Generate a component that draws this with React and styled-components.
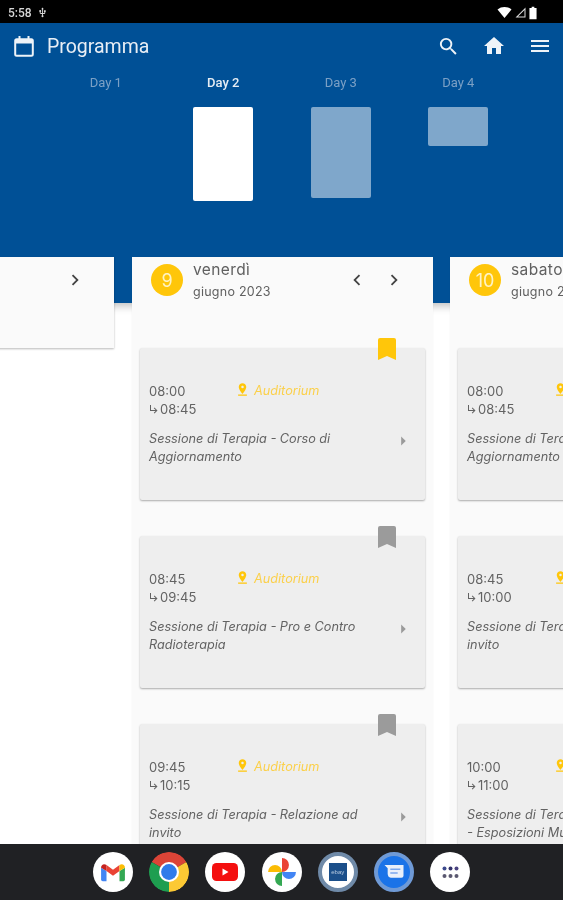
import React from 'react';
import styled, { createGlobalStyle } from 'styled-components';
import {
  MdSearch, MdHome, MdMenu, MdChevronLeft, MdChevronRight,
  MdPinDrop, MdArrowRight, MdSubdirectoryArrowRight, MdUsb,
} from 'react-icons/md';

const Global = createGlobalStyle`
  html, body { margin: 0; padding: 0; background: #fff; }
  * { box-sizing: border-box; }
`;

const Page = styled.div`
  width: 563px; height: 900px; display: flex; flex-direction: column; overflow: hidden;
  font-family: "Roboto", "Liberation Sans", sans-serif; filter: blur(0.45px);
`;
const StatusBar = styled.div`
  height: 23px; flex: none; background: #000; color: #d8d8d8; display: flex; align-items: center;
  padding: 2px 26px 0 8px; font-size: 12px; font-weight: 500; gap: 5px;
`;
const StatusRight = styled.div`
  margin-left: auto; display: flex; align-items: center; gap: 3px;
`;
const Main = styled.div`
  flex: 1; min-height: 0; overflow: hidden; background: #fff;
`;
const Hero = styled.header`
  height: 280px; background: #005096; box-shadow: 0 3px 8px rgba(0,0,0,.25); color: #fff;
`;
const AppBar = styled.div`
  height: 46px; display: flex; align-items: center; padding: 0 11px 0 14px;
`;
const Title = styled.h1`
  margin: 0 0 0 13px; font-size: 19.5px; font-weight: 400; color: #e8eef5; flex: 1;
`;
const ActionRow = styled.div`
  display: flex; align-items: center; gap: 22px; color: #eef3f8;
`;
const Tabs = styled.div`
  display: grid; grid-template-columns: repeat(4, 117.5px); padding: 0 0 0 47px; margin-top: 5px;
`;
const Tab = styled.div`
  display: flex; flex-direction: column; align-items: center; gap: 15px;
`;
const TabLabel = styled.span`
  font-size: 13px; line-height: 18px; font-weight: ${p => p.$active ? 500 : 400};
  color: ${p => p.$active ? '#e6edf4' : '#7ba0c5'};
`;
const Bar = styled.div`
  width: 60px; border-radius: 2px; height: ${p => p.$h}px;
  background: ${p => p.$active ? '#fff' : '#7fa7cb'};
`;
const Board = styled.div`
  display: grid; grid-template-columns: 300px 301px 300px; column-gap: 18px; align-items: start;
  margin: -46px 0 0 -186px; width: 936px; position: relative;
`;
const Column = styled.section`
  background: #fafafa;
  box-shadow: ${p => p.$short ? '0 1px 2px rgba(0,0,0,.28)' : '0 0 1px rgba(0,0,0,.08)'};
  padding-bottom: ${p => p.$short ? '0' : '40px'};
  margin-left: ${p => p.$pull ? '-1px' : '0'};
`;
const ColumnHead = styled.div`
  height: 91px; display: flex; align-items: flex-start; padding: 7px 27px 0 19px;
`;
const Badge = styled.div`
  width: 32px; height: 32px; border-radius: 50%; background: #ffc60a; color: #fff3c4; flex: none;
  display: flex; align-items: center; justify-content: center; font-size: 18px; font-family: "Inter", sans-serif;
`;
const DateText = styled.div`
  margin-left: 10px; flex: 1; margin-top: -4px; font-family: "Inter", sans-serif; color: #606060;
`;
const DayName = styled.div`
  font-size: 15.5px; line-height: 20px; letter-spacing: .4px;
`;
const MonthName = styled.div`
  font-size: 12.5px; line-height: 20px; margin-top: 2px; letter-spacing: .25px;
`;
const Navs = styled.div`
  display: flex; gap: 15px; color: #444; margin: 5px 1px 0 0;
`;
const NavSlot = styled.div`
  width: 22px; height: 22px; display: flex; align-items: center; justify-content: center;
`;
const List = styled.div`
  display: flex; flex-direction: column; gap: 36px; padding: 0 8px;
`;
const Session = styled.article`
  position: relative; height: 152px; background: #eeeeee; border-radius: 2px; padding: 34px 11px 0 9px;
  box-shadow: 0 1px 2px rgba(0,0,0,.32); font-family: "Inter", sans-serif; color: #626262;
`;
const Mark = styled.svg`
  position: absolute; top: -10px; right: 29px; width: 18px; height: 22px;
`;
const TimeRow = styled.div`
  display: flex; font-size: 13px; line-height: 18px;
`;
const Times = styled.div`
  width: 87px; flex: none;
`;
const EndTime = styled.div`
  display: flex; align-items: center; margin-left: -1px;
`;
const Place = styled.div`
  display: flex; align-items: center; height: 18px; font-style: italic; font-size: 12.7px; color: #fbd04b;
`;
const PinIcon = styled(MdPinDrop)`
  color: #ffc60a; margin-right: 4px; margin-top: -3px; margin-left: -1px; flex: none;
`;
const TitleRow = styled.div`
  display: flex; margin-top: 12px;
`;
const SessionTitle = styled.div`
  flex: 1; font-style: italic; font-size: 12.7px; line-height: 18px; white-space: pre-line; padding-right: 28px;
`;
const ArrowIcon = styled(MdArrowRight)`
  color: #9a9a9a; flex: none;
`;
const Dock = styled.nav`
  height: 56px; flex: none; background: #202124; display: flex; align-items: center;
  padding-left: 93px; gap: 16.2px;
`;
const DockIcon = styled.div`
  width: 40px; height: 40px; border-radius: 50%; background: ${p => p.$bg || '#fff'}; flex: none;
  display: flex; align-items: center; justify-content: center; overflow: hidden;
  border: ${p => p.$ring ? `4px solid ${p.$ring}` : 'none'};
`;
const EbayTile = styled.div`
  width: 18px; height: 18px; background: #1b4f8a; color: #b8cbe0; font-size: 6px; display: flex;
  align-items: center; justify-content: center; font-family: "Liberation Sans", sans-serif;
`;

const CalendarIcon = () => (
  <svg width="20" height="21" viewBox="0 0 20 21" fill="none">
    <rect x="1.2" y="3.2" width="17.600" height="16.600" rx="1.500" stroke="#eef3f8" strokeWidth="2" />
    <rect x="1" y="3" width="18" height="4.500" fill="#eef3f8" />
    <path d="M5.500 0v3M14.500 0v3" stroke="#eef3f8" strokeWidth="2" />
  </svg>
);

const BookmarkMark = ({ on }) => (
  <Mark viewBox="0 0 18 22"><path d="M2 0h14a2 2 0 0 1 2 2v20l-9-4-9 4V2a2 2 0 0 1 2-2z" fill={on ? '#ffc60a' : '#9b9b9b'} /></Mark>
);

const SessionCard = ({ start, end, title, on }) => (
  <Session>
    <BookmarkMark on={on} />
    <TimeRow>
      <Times>
        <div>{start}</div>
        <EndTime><MdSubdirectoryArrowRight size={12} />{end}</EndTime>
      </Times>
      <Place><PinIcon size={15} />Auditorium</Place>
    </TimeRow>
    <TitleRow>
      <SessionTitle>{title}</SessionTitle>
      <ArrowIcon size={22} />
    </TitleRow>
  </Session>
);

const Gmail = () => (
  <svg width="26" height="20" viewBox="0 0 24 18">
    <path d="M1 5v11a1.500 1.500 0 0 0 1.500 1.500H6V8z" fill="#4285f4" />
    <path d="M23 5v11a1.500 1.500 0 0 1-1.500 1.500H18V8z" fill="#34a853" />
    <path d="M6 8V2.500L12 7l6-4.500V8l-6 4.500z" fill="#ea4335" />
    <path d="M1 5c0-3 2.800-4 5-2.500V8z" fill="#c5221f" />
    <path d="M23 5c0-3-2.800-4-5-2.500V8z" fill="#fbbc04" />
  </svg>
);
const Chrome = () => (
  <svg width="40" height="40" viewBox="0 0 38 38">
    <path d="M19 19 L2.500 9.500 A19 19 0 0 1 35.500 9.500 Z" fill="#db4437" />
    <path d="M19 19 L35.500 9.500 A19 19 0 0 1 19 38 Z" fill="#fcc934" />
    <path d="M19 19 L19 38 A19 19 0 0 1 2.500 9.500 Z" fill="#1e9e50" />
    <circle cx="19" cy="19" r="9.500" fill="#fff" /><circle cx="19" cy="19" r="7.500" fill="#2f7bea" />
  </svg>
);
const YouTube = () => (
  <svg width="26" height="18" viewBox="0 0 26 18">
    <rect width="26" height="18" rx="4.500" fill="#f40f0f" /><path d="M10.500 5.500v7l6-3.500z" fill="#fff" />
  </svg>
);
const Photos = () => (
  <svg width="30" height="30" viewBox="0 0 28 28">
    <path d="M14 14 V1 a6.500 6.500 0 0 1 0 13z" fill="#ea4335" />
    <path d="M14 14 h13 a6.500 6.500 0 0 1 -13 0z" fill="#4285f4" />
    <path d="M14 14 v13 a6.500 6.500 0 0 1 0 -13z" fill="#34a853" />
    <path d="M14 14 H1 a6.500 6.500 0 0 1 13 0z" fill="#fbbc04" />
  </svg>
);
const Messages = () => (
  <svg width="22" height="19" viewBox="0 0 20 18">
    <path d="M1 2h18v10a2 2 0 0 1-2 2H7c-2 0-3-2-3-4V5z" fill="#e8effa" />
    <path d="M6.500 6h9.500M6.500 9.500h7" stroke="#7aa7ee" strokeWidth="1.400" />
  </svg>
);
const Dots = () => (
  <svg width="17" height="13" viewBox="0 0 17 13">
    {[2.500, 8.500, 14.500].map((x, i) => (
      <g key={x}>
        <circle cx={x} cy="2.500" r="2" fill={['#3c4a8c', '#33336b', '#4a4280'][i]} />
        <circle cx={x} cy="10" r="2" fill="#5a5870" />
      </g>
    ))}
  </svg>
);

const days = [
  { label: 'Day 1', h: 0 }, { label: 'Day 2', h: 94, active: true }, { label: 'Day 3', h: 91 }, { label: 'Day 4', h: 39 },
];
const col2 = [
  { start: '08:00', end: '08:45', title: 'Sessione di Terapia - Corso di Aggiornamento', on: true },
  { start: '08:45', end: '09:45', title: 'Sessione di Terapia - Pro e Contro Radioterapia' },
  { start: '09:45', end: '10:15', title: 'Sessione di Terapia - Relazione ad invito' },
];
const col3 = [
  { start: '08:00', end: '08:45', title: 'Sessione di Terapia - Corso di Aggiornamento' },
  { start: '08:45', end: '10:00', title: 'Sessione di Terapia - Relazione ad invito' },
  { start: '10:00', end: '11:00', title: 'Sessione di Terapia\n- Esposizioni Multimediali' },
];

const DayHead = ({ n, name, prev, next = true }) => (
  <ColumnHead>
    {n && <Badge>{n}</Badge>}
    <DateText>
      {name && <DayName>{name}</DayName>}
      {name && <MonthName>giugno 2023</MonthName>}
    </DateText>
    <Navs>
      <NavSlot>{prev && <MdChevronLeft size={22} />}</NavSlot>
      <NavSlot>{next && <MdChevronRight size={22} />}</NavSlot>
    </Navs>
  </ColumnHead>
);

export default function App() {
  return (
    <>
      <Global />
      <Page>
        <StatusBar>
          <span>5:58</span>
          <MdUsb size={11} />
          <StatusRight>
            <svg width="15" height="11" viewBox="0 0 14 11"><path d="M0 2.500C4-.8 10-.8 14 2.500L7 11z" fill="#fff" /></svg>
            <svg width="11" height="11" viewBox="0 0 11 11"><path d="M10.500.5v10H.5zM9.500 3L3 9.500h6.500z" fill="#ddd" fillRule="evenodd" /></svg>
            <svg width="8" height="14" viewBox="0 0 9 14"><path d="M3 0h3v1.500h2.500V14H.5V1.500H3z" fill="#fff" /></svg>
          </StatusRight>
        </StatusBar>
        <Main>
          <Hero>
            <AppBar>
              <CalendarIcon />
              <Title>Programma</Title>
              <ActionRow>
                <MdSearch size={23} />
                <MdHome size={24} />
                <MdMenu size={24} />
              </ActionRow>
            </AppBar>
            <Tabs>
              {days.map(d => (
                <Tab key={d.label}>
                  <TabLabel $active={d.active}>{d.label}</TabLabel>
                  {d.h > 0 && <Bar $h={d.h} $active={d.active} />}
                </Tab>
              ))}
            </Tabs>
          </Hero>
          <Board>
            <Column $short><DayHead /></Column>
            <Column>
              <DayHead n="9" name="venerdì" prev />
              <List>{col2.map(s => <SessionCard key={s.start} {...s} />)}</List>
            </Column>
            <Column $pull>
              <DayHead n="10" name="sabato" prev />
              <List>{col3.map(s => <SessionCard key={s.start} {...s} />)}</List>
            </Column>
          </Board>
        </Main>
        <Dock>
          <DockIcon><Gmail /></DockIcon>
          <DockIcon $bg="transparent"><Chrome /></DockIcon>
          <DockIcon><YouTube /></DockIcon>
          <DockIcon><Photos /></DockIcon>
          <DockIcon $ring="#6f8aa8"><EbayTile>ebay</EbayTile></DockIcon>
          <DockIcon $bg="#1a73e8" $ring="#6f9ad6"><Messages /></DockIcon>
          <DockIcon><Dots /></DockIcon>
        </Dock>
      </Page>
    </>
  );
}
